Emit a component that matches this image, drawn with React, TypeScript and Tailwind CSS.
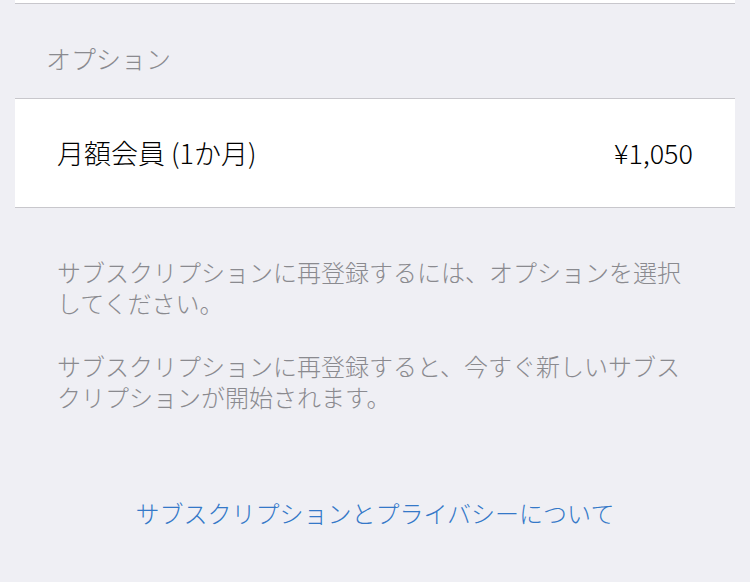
import React from 'react';

const font = { fontFamily: '"Noto Sans CJK JP", "Noto Sans", sans-serif' };

const App: React.FC = () => {
    return (
        <div className="w-[750px] h-[582px] bg-[#efeff4] overflow-hidden font-light" style={font}>
            <div className="mx-[15px]">
                {/* tail of previous group */}
                <div className="h-[4px] bg-white border-b border-[#c8c7cc]"></div>

                <div className="pt-[39px] pb-[25px] pl-[31px] text-[25px] leading-[30px] text-[#8a8a8f]">
                    オプション
                </div>

                <div className="h-[110px] bg-white border-y border-[#c8c7cc] flex items-center justify-between px-[42px] text-[27px] text-black">
                    <span>月額会員 (1か月)</span>
                    <span>¥1,050</span>
                </div>
            </div>

            <div className="px-[57px] pt-[48px] text-[24px] leading-[31px] text-[#8a8a8f] flex flex-col gap-[32px]">
                <p>サブスクリプションに再登録するには、オプションを選択してください。</p>
                <p>サブスクリプションに再登録すると、今すぐ新しいサブスクリプションが開始されます。</p>
            </div>

            <div className="pt-[85px] text-center text-[24px] leading-[31px] text-[#3478c8]">
                サブスクリプションとプライバシーについて
            </div>
        </div>
    );
};

export default App;
